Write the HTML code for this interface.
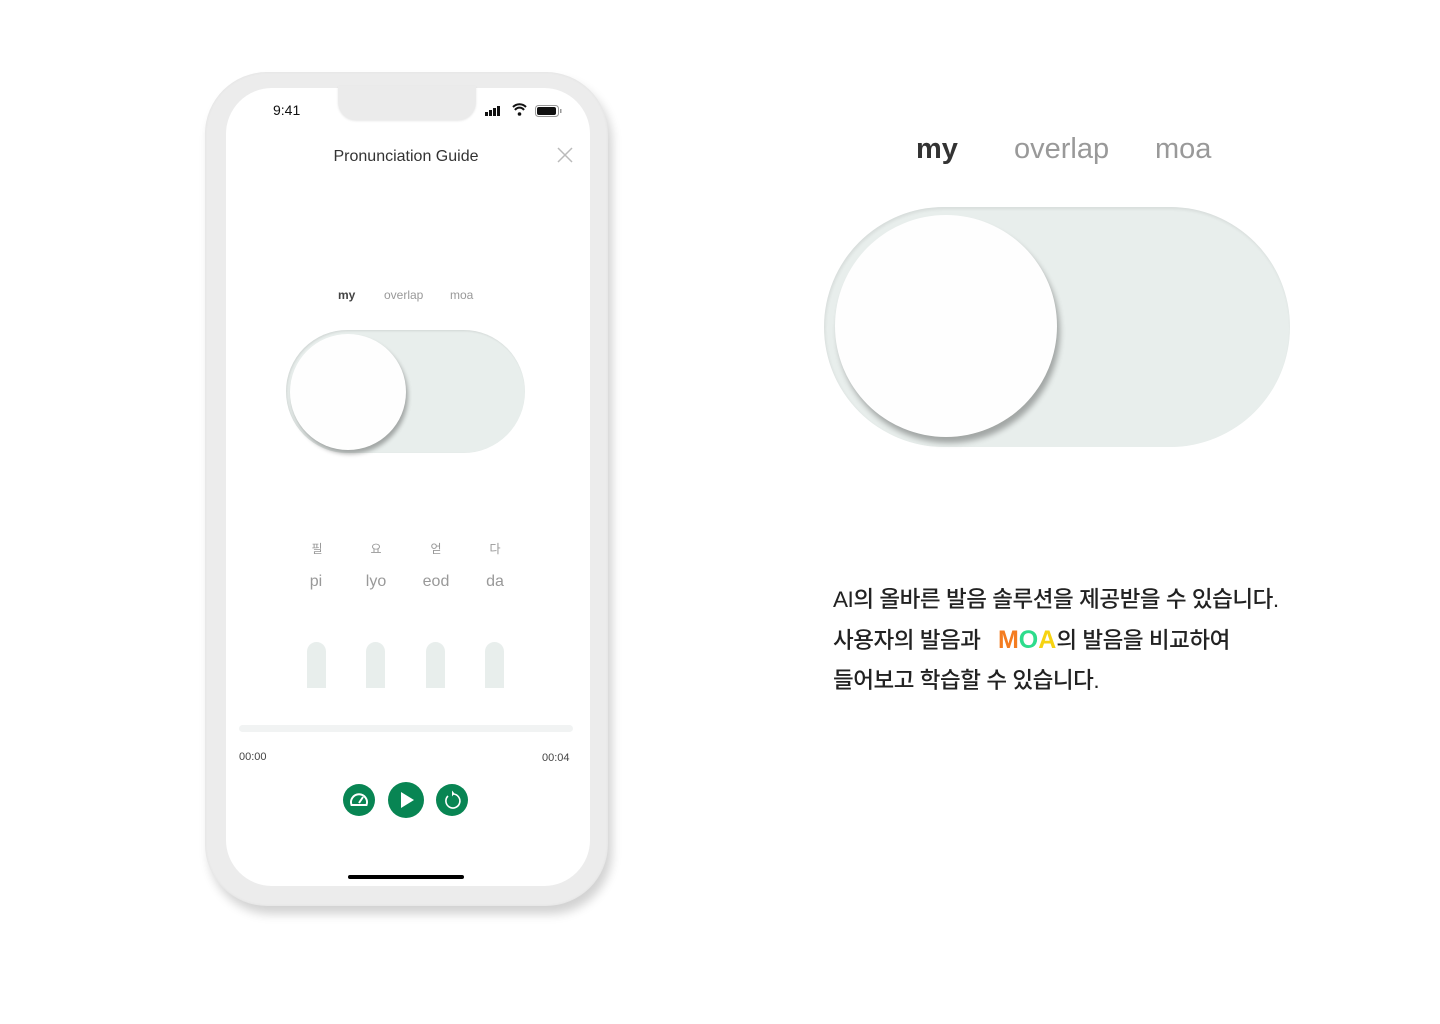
<!DOCTYPE html>
<html><head><meta charset="utf-8"><style>
*{margin:0;padding:0;box-sizing:border-box}
body{width:1440px;height:1024px;background:#fff;position:relative;overflow:hidden;font-family:"Liberation Sans","Noto Sans CJK KR",sans-serif}
.a{position:absolute}
</style></head><body>
<div class="a" style="left:205px;top:72px;width:403px;height:834px;border-radius:62px;background:#ececec;box-shadow:4px 8px 10px rgba(0,0,0,.18), inset 0 0 3px rgba(0,0,0,.05)"></div>
<div class="a" style="left:226px;top:88px;width:364px;height:798px;border-radius:46px;background:#fff"></div>
<div class="a" style="left:338px;top:86px;width:138px;height:34px;background:#ebebeb;border-radius:0 0 18px 18px;box-shadow:0 1px 2px rgba(0,0,0,.1)"></div>
<div class="a" style="left:273px;top:102px;font-size:14px;color:#111">9:41</div>
<svg class="a" style="left:485px;top:103px" width="80" height="16">
<rect x="0" y="9" width="3" height="4" fill="#111"/><rect x="4" y="7" width="3" height="6" fill="#111"/><rect x="8" y="5" width="3" height="8" fill="#111"/><rect x="12" y="3" width="3" height="10" fill="#111"/>
<path d="M28 4a9 9 0 0 1 13 0M30 7a5.5 5.5 0 0 1 9 0" stroke="#111" stroke-width="2" fill="none"/><circle cx="34.5" cy="11" r="1.8" fill="#111"/>
<rect x="50.5" y="2.5" width="23" height="11" rx="3" fill="none" stroke="#999"/><rect x="52" y="4" width="19" height="8" rx="2" fill="#111"/><rect x="75" y="6" width="1.5" height="4" fill="#999"/>
</svg>
<div class="a" style="left:224px;width:364px;top:148px;text-align:center;font-size:16px;color:#333">Pronunciation Guide</div>
<svg class="a" style="left:557px;top:147px" width="16" height="16"><path d="M1 1L15 15M15 1L1 15" stroke="#bbb" stroke-width="1.5"/></svg>
<div class="a" style="left:338px;top:288px;font-size:12px;font-weight:bold;color:#444">my</div>
<div class="a" style="left:384px;top:288px;font-size:12px;color:#999">overlap</div>
<div class="a" style="left:450px;top:288px;font-size:12px;color:#999">moa</div>
<div class="a" style="left:286px;top:330px;width:239px;height:123px;border-radius:62px;background:#e8eeec;box-shadow:inset 1px 1px 2px rgba(0,0,0,.1)"></div>
<div class="a" style="left:290px;top:334px;width:116px;height:116px;border-radius:50%;background:#fefefe;box-shadow:2px 4px 4px rgba(0,0,0,.3)"></div>
<div class="a" style="left:305px;top:540px;width:24px;text-align:center;font-size:12px;color:#999">필</div>
<div class="a" style="left:364px;top:540px;width:24px;text-align:center;font-size:12px;color:#999">요</div>
<div class="a" style="left:424px;top:540px;width:24px;text-align:center;font-size:12px;color:#999">얻</div>
<div class="a" style="left:483px;top:540px;width:24px;text-align:center;font-size:12px;color:#999">다</div>
<div class="a" style="left:296px;top:573px;width:40px;text-align:center;font-size:16px;color:#999">pi</div>
<div class="a" style="left:356px;top:573px;width:40px;text-align:center;font-size:16px;color:#999">lyo</div>
<div class="a" style="left:416px;top:573px;width:40px;text-align:center;font-size:16px;color:#999">eod</div>
<div class="a" style="left:475px;top:573px;width:40px;text-align:center;font-size:16px;color:#999">da</div>
<div class="a" style="left:307px;top:642px;width:19px;height:46px;border-radius:10px 10px 0 0;background:#e8eeec"></div>
<div class="a" style="left:366px;top:642px;width:19px;height:46px;border-radius:10px 10px 0 0;background:#e8eeec"></div>
<div class="a" style="left:426px;top:642px;width:19px;height:46px;border-radius:10px 10px 0 0;background:#e8eeec"></div>
<div class="a" style="left:485px;top:642px;width:19px;height:46px;border-radius:10px 10px 0 0;background:#e8eeec"></div>
<div class="a" style="left:239px;top:725px;width:334px;height:7px;border-radius:4px;background:#f1f3f3"></div>
<div class="a" style="left:239px;top:751px;font-size:11px;color:#444">00:00</div>
<div class="a" style="left:542px;top:752px;font-size:11px;color:#444">00:04</div>
<svg class="a" style="left:342px;top:780px" width="130" height="40">
<circle cx="17" cy="20" r="16" fill="#088553"/>
<path d="M9.5 25a8 8 0 1 1 15 0z" fill="none" stroke="#fff" stroke-width="2"/><path d="M17 23l4-6" stroke="#fff" stroke-width="2"/>
<circle cx="64" cy="20" r="18" fill="#088553"/><path d="M59 12v16l13-8z" fill="#fff"/>
<circle cx="110" cy="20" r="16" fill="#088553"/>
<path d="M106 16a7 7 0 1 0 5-2" fill="none" stroke="#fff" stroke-width="1.6"/><path d="M110 10.5v6l2.5-3z" fill="#fff"/>
</svg>
<div class="a" style="left:348px;top:875px;width:116px;height:4px;border-radius:2px;background:#000"></div>

<div class="a" style="left:916px;top:133px;font-size:29px;font-weight:bold;color:#333">my</div>
<div class="a" style="left:1014px;top:133px;font-size:29px;color:#999">overlap</div>
<div class="a" style="left:1155px;top:133px;font-size:29px;color:#999">moa</div>
<div class="a" style="left:824px;top:207px;width:466px;height:240px;border-radius:120px;background:#e8eeec;box-shadow:inset 1px 2px 3px rgba(0,0,0,.08)"></div>
<div class="a" style="left:835px;top:215px;width:222px;height:222px;border-radius:50%;background:#fefefe;box-shadow:3px 6px 6px rgba(0,0,0,.3)"></div>
<div class="a" style="left:833px;top:580px;font-size:22.5px;line-height:40px;color:#222;letter-spacing:-.45px;font-weight:500">AI의 올바른 발음 솔루션을 제공받을 수 있습니다.<br>사용자의 발음과 &nbsp;&nbsp;<b style="font-family:'Liberation Sans',sans-serif;font-weight:900;font-size:25px;letter-spacing:0"><span style="color:#f47c20">M</span><span style="color:#2ddc8c">O</span><span style="color:#f6d312">A</span></b>의 발음을 비교하여<br>들어보고 학습할 수 있습니다.</div>
</body></html>
